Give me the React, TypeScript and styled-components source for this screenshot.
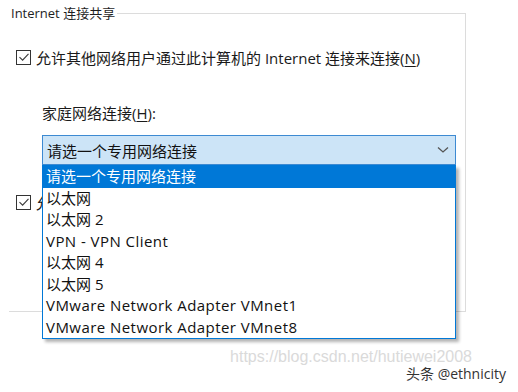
import React from "react";
import styled, { createGlobalStyle } from "styled-components";

const GlobalStyle = createGlobalStyle`
  html, body {
    margin: 0;
    padding: 0;
    background: #ffffff;
  }
  body {
    font-family: "Open Sans", "Noto Sans CJK SC", sans-serif;
    color: #1a1a1a;
    width: 518px;
    height: 392px;
    overflow: hidden;
  }
`;

const Page = styled.div`
  display: flex;
  flex-direction: column;
  padding-top: 4px;
`;

const GroupBox = styled.fieldset`
  margin: 0 0 0 9px;
  padding: 0;
  width: 457px;
  height: 308px;
  box-sizing: border-box;
  border: 1px solid #dcdcdc;
  border-left: none;
  min-width: 0;
`;

const GroupTitle = styled.legend`
  padding: 0 2px;
  margin: 0;
  font-size: 13px;
  line-height: 18px;
  color: #1e1e1e;
`;

const GroupBody = styled.div`
  display: flex;
  flex-direction: column;
  padding-left: 7px;
`;

const CheckRow = styled.label<{ $top: number }>`
  display: flex;
  align-items: center;
  gap: 5px;
  height: 20px;
  margin-top: ${p => p.$top}px;
  font-size: 15px;
  white-space: nowrap;
`;

const CheckBox = styled.span`
  width: 15px;
  height: 15px;
  box-sizing: border-box;
  border: 1px solid #333333;
  background: #ffffff;
  display: flex;
  align-items: center;
  justify-content: center;
  flex: none;
`;

const Key = styled.span`
  text-decoration: underline;
  text-underline-offset: 2px;
`;

const FieldLabel = styled.div`
  margin: 36px 0 0 26px;
  height: 20px;
  line-height: 20px;
  font-size: 15px;
`;

const ComboWrap = styled.div`
  position: relative;
  margin: 12px 0 0 26px;
  width: 414px;
`;

const Combo = styled.div`
  height: 30px;
  box-sizing: border-box;
  border: 1px solid #3d8ad2;
  background: #cce4f7;
  display: flex;
  align-items: center;
  justify-content: space-between;
  padding: 0 6px 0 4px;
  font-size: 15px;
  color: #111111;
`;

const List = styled.ul`
  position: absolute;
  top: 100%;
  left: 0;
  width: 414px;
  box-sizing: border-box;
  margin: 0;
  padding: 0;
  list-style: none;
  background: #ffffff;
  border: 1px solid #0078d7;
  box-shadow: 3px 3px 3px rgba(0, 0, 0, 0.3);
  z-index: 2;
`;

const Item = styled.li<{ $selected?: boolean; $latin?: boolean }>`
  height: 21.5px;
  line-height: 21.5px;
  padding-left: 3px;
  font-size: 15px;
  white-space: nowrap;
  letter-spacing: ${p => (p.$latin ? "0.45px" : "0")};
  background: ${p => (p.$selected ? "#0078d7" : "transparent")};
  color: ${p => (p.$selected ? "#ffffff" : "#111111")};
`;

const Watermark = styled.div`
  align-self: flex-end;
  margin: 36px 46px 0 0;
  font-family: "Liberation Sans", Arial, sans-serif;
  font-size: 16px;
  line-height: 18px;
  color: #dadada;
`;

const Credit = styled.div`
  align-self: flex-end;
  margin: -1px 12px 0 0;
  font-size: 14px;
  line-height: 18px;
  color: #333333;
`;

const Check = () => (
  <svg width="12" height="12" viewBox="0 0 12 12">
    <polyline points="1.5,6.2 4.6,9.2 10.5,2.8" fill="none" stroke="#3a3a3a" strokeWidth="1.1" />
  </svg>
);

const Chevron = () => (
  <svg width="12" height="8" viewBox="0 0 12 8">
    <polyline points="1,1.5 6,6 11,1.5" fill="none" stroke="#555555" strokeWidth="1.3" />
  </svg>
);

const options = [
  "请选一个专用网络连接",
  "以太网",
  "以太网 2",
  "VPN - VPN Client",
  "以太网 4",
  "以太网 5",
  "VMware Network Adapter VMnet1",
  "VMware Network Adapter VMnet8",
];

export default function App() {
  return (
    <>
      <GlobalStyle />
      <Page>
        <GroupBox>
          <GroupTitle>Internet 连接共享</GroupTitle>
          <GroupBody>
            <CheckRow $top={25}>
              <CheckBox><Check /></CheckBox>
              <span>允许其他网络用户通过此计算机的 Internet 连接来连接(<Key>N</Key>)</span>
            </CheckRow>
            <FieldLabel>家庭网络连接(<Key>H</Key>):</FieldLabel>
            <ComboWrap>
              <Combo>
                <span>请选一个专用网络连接</span>
                <Chevron />
              </Combo>
              <List>
                {options.map((o, i) => (
                  <Item key={o} $selected={i === 0} $latin={/^[\x20-\x7e]+$/.test(o)}>
                    {o}
                  </Item>
                ))}
              </List>
            </ComboWrap>
            <CheckRow $top={27}>
              <CheckBox><Check /></CheckBox>
              <span>允许其他网络用户控制或禁用共享的 Internet 连接(<Key>O</Key>)</span>
            </CheckRow>
          </GroupBody>
        </GroupBox>
        <Watermark>https://blog.csdn.net/hutiewei2008</Watermark>
        <Credit>头条 @ethnicity</Credit>
      </Page>
    </>
  );
}
